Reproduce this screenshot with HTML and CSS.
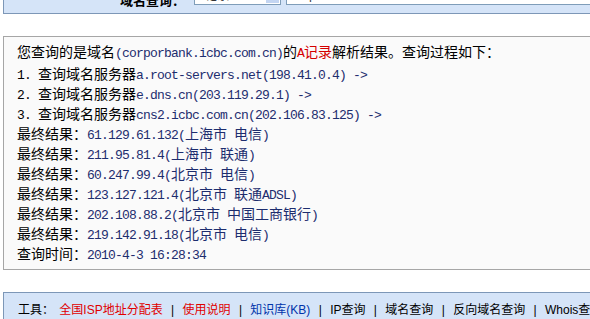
FILE: index.html
```html
<!DOCTYPE html>
<html lang="zh-CN">
<head>
    <meta charset="UTF-8">
    <title>域名查询</title>
    <link rel="stylesheet" href="styles.css">
</head>
<body>
    <div class="page">
        <div class="searchbar">
            <span class="search-label">域名查询：</span>
            <div class="select">
                <span class="select-text">A记录</span>
                <span class="select-btn"></span>
            </div>
            <div class="input">corporbank.icbc.com.cn</div>
        </div>

        <div class="result">
            <p class="intro">您查询的是域名<span class="mono">(corporbank.icbc.com.cn)</span>的<span class="red"><span class="mono">A</span>记录</span>解析结果。查询过程如下：</p>
            <p><span class="num">1. </span>查询域名服务器<span class="mono">a.root-servers.net(198.41.0.4) -&gt;</span></p>
            <p><span class="num">2. </span>查询域名服务器<span class="mono">e.dns.cn(203.119.29.1) -&gt;</span></p>
            <p><span class="num">3. </span>查询域名服务器<span class="mono">cns2.icbc.com.cn(202.106.83.125) -&gt;</span></p>
            <p>最终结果：<span class="val"><span class="mono">61.129.61.132(</span>上海市<span class="mono"> </span>电信<span class="mono">)</span></span></p>
            <p>最终结果：<span class="val"><span class="mono">211.95.81.4(</span>上海市<span class="mono"> </span>联通<span class="mono">)</span></span></p>
            <p>最终结果：<span class="val"><span class="mono">60.247.99.4(</span>北京市<span class="mono"> </span>电信<span class="mono">)</span></span></p>
            <p>最终结果：<span class="val"><span class="mono">123.127.121.4(</span>北京市<span class="mono"> </span>联通<span class="mono">ADSL)</span></span></p>
            <p>最终结果：<span class="val"><span class="mono">202.108.88.2(</span>北京市<span class="mono"> </span>中国工商银行<span class="mono">)</span></span></p>
            <p>最终结果：<span class="val"><span class="mono">219.142.91.18(</span>北京市<span class="mono"> </span>电信<span class="mono">)</span></span></p>
            <p>查询时间：<span class="val mono">2010-4-3 16:28:34</span></p>
        </div>

        <div class="toolbar">
            <span class="tool-label">工具：</span>
            <a href="#" class="red">全国ISP地址分配表</a>
            <span class="sep">|</span>
            <a href="#" class="red">使用说明</a>
            <span class="sep">|</span>
            <a href="#" class="blue">知识库(KB)</a>
            <span class="sep">|</span>
            <a href="#">IP查询</a>
            <span class="sep">|</span>
            <a href="#">域名查询</a>
            <span class="sep">|</span>
            <a href="#">反向域名查询</a>
            <span class="sep">|</span>
            <a href="#">Whois查询</a>
        </div>
    </div>
</body>
</html>
```

FILE: styles.css
```css
body {
    margin: 0;
    overflow: hidden;
    background: #fff;
    font-family: "Noto Sans CJK SC", sans-serif;
    color: #000;
}
.page {
    width: 640px;
    padding-left: 3px;
}
.searchbar {
    display: flex;
    align-items: flex-end;
    height: 30px;
    margin-top: -16px;
    padding-bottom: 8px;
    box-sizing: border-box;
    background: #d5e4f8;
    border: 1px solid #7d97b7;
    border-top: none;
}
.search-label {
    width: 181px;
    text-align: right;
    font-size: 13px;
    font-weight: bold;
    line-height: 14px;
    margin-bottom: -2px;
}
.select {
    display: flex;
    justify-content: space-between;
    margin-left: 9px;
    width: 87px;
    height: 20px;
    border: 1px solid #7f9db9;
    background: #fff;
    box-sizing: border-box;
}
.select-text {
    font-size: 12px;
    line-height: 18px;
    padding-left: 3px;
    color: #333;
}
.select-btn {
    width: 13px;
    margin: 1px;
    background: #c3d5f2;
}
.input {
    margin-left: 5px;
    width: 320px;
    height: 20px;
    box-sizing: border-box;
    border: 1px solid #7f9db9;
    background: #fff;
    font-family: "Liberation Sans", sans-serif;
    font-size: 13px;
    line-height: 18px;
    padding-left: 4px;
    color: #444;
}
.result {
    margin-top: 22px;
    padding: 4px 0 6px 13px;
    background: #fafafa;
    border: 1px solid #a6a6a6;
    border-right: none;
}
.result p {
    margin: 0;
    height: 20px;
    font-size: 14px;
    line-height: 20px;
    white-space: nowrap;
}
.result p span {
    line-height: 1;
}
.result .intro {
    margin-bottom: 2px;
}
.mono,
.num {
    font-family: "Liberation Mono", monospace;
    font-size: 13px;
    letter-spacing: -0.8px;
}
.result .mono {
    color: #1d2d6e;
}
.result .num {
    color: #000;
}
.val {
    color: #1d2d6e;
}
.red,
.result .red .mono {
    color: #d40000;
}
.toolbar {
    margin-top: 22px;
    padding: 9px 0 14px 14px;
    background: #d5e4f8;
    border: 1px solid #7d97b7;
    border-right: none;
    font-size: 12px;
    line-height: 16px;
    white-space: nowrap;
    font-family: "Liberation Sans", "Noto Sans CJK SC", sans-serif;
}
.toolbar a {
    text-decoration: none;
    color: #000;
}
.toolbar a.red {
    color: #e00000;
}
.toolbar a.blue {
    color: #0033aa;
}
.tool-label {
    margin-right: 2px;
}
.sep {
    margin: 0 5px;
}
```
